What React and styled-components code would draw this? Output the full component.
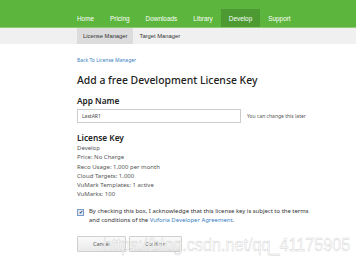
import React from 'react';
import styled, { createGlobalStyle } from 'styled-components';

const GlobalStyle = createGlobalStyle`
  body {
    margin: 0;
    background: #ffffff;
    font-family: "Liberation Sans", Arial, sans-serif;
  }
`;

const Page = styled.div`
  position: relative;
  width: 356px;
  height: 271px;
  overflow: hidden;
  background: #ffffff;
`;

const TopBar = styled.nav`
  height: 28px;
  background: #5cb53c;
  border-bottom: 1px solid #8dcc72;
  display: flex;
  align-items: flex-end;
  padding-left: 69px;
  box-sizing: border-box;
`;

const NavItem = styled.a`
  height: 18px;
  display: flex;
  align-items: center;
  padding: 0 8px;
  font-family: "Liberation Sans", Arial, sans-serif;
  font-size: 6.4px;
  color: #ffffff;
  background: ${(p) => (p.active ? '#4c9a31' : 'transparent')};
`;

const SubBar = styled.div`
  height: 16px;
  background: #f0f0f0;
  display: flex;
  padding-left: 77px;
`;

const SubItem = styled.a`
  display: flex;
  align-items: center;
  padding: 0 6px;
  font-family: "Liberation Sans", Arial, sans-serif;
  font-size: 5.8px;
  color: #333333;
  background: ${(p) => (p.active ? '#dcdcdc' : 'transparent')};
`;

const Content = styled.main`
  padding: 13px 0 0 77px;
  font-family: "Noto Sans", "Liberation Sans", sans-serif;
  color: #333333;
`;

const BackLink = styled.a`
  display: block;
  font-size: 5px;
  color: #3a7fc1;
  line-height: 7px;
`;

const Title = styled.h1`
  margin: 9px 0 0;
  font-size: 10.4px;
  font-weight: 500;
  color: #222222;
  line-height: 14px;
`;

const Label = styled.h2`
  margin: ${(p) => p.top}px 0 0;
  font-size: 8.3px;
  font-weight: 600;
  color: #222222;
  line-height: 11px;
`;

const InputRow = styled.div`
  display: flex;
  align-items: center;
  margin-top: 3px;
`;

const TextInput = styled.div`
  width: 164px;
  height: 14px;
  box-sizing: border-box;
  border: 1px solid #cccccc;
  display: flex;
  align-items: center;
  padding-left: 4px;
  font-size: 5px;
  color: #444444;
`;

const Hint = styled.span`
  margin-left: 6px;
  font-size: 5px;
  color: #555555;
`;

const InfoList = styled.div`
  margin-top: 1px;
  display: flex;
  flex-direction: column;
`;

const InfoLine = styled.span`
  font-size: 6px;
  line-height: 9.3px;
  color: #555555;
`;

const AgreeRow = styled.div`
  display: flex;
  align-items: flex-start;
  margin-top: 7px;
  gap: 5px;
`;

const Check = styled.span`
  width: 5px;
  height: 5px;
  margin-top: 2px;
  border: 1px solid #7b9bc7;
  background: #dfe8f5;
  display: flex;
  align-items: center;
  justify-content: center;
  font-size: 5px;
  line-height: 5px;
  color: #203a6a;
`;

const AgreeText = styled.p`
  margin: 0;
  white-space: nowrap;
  font-size: 5.95px;
  line-height: 9.5px;
  color: #333333;
`;

const AgreeLink = styled.a`
  color: #3a7fc1;
`;

const Buttons = styled.div`
  display: flex;
  gap: 3px;
  margin-top: 10px;
`;

const Button = styled.button`
  width: ${(p) => p.w}px;
  height: 16px;
  padding: 0;
  border: 1px solid #cfcfcf;
  border-radius: 1px;
  background: linear-gradient(#fafafa, #e9e9e9);
  font-family: "Noto Sans", "Liberation Sans", sans-serif;
  font-size: 5.5px;
  color: #555555;
`;

const Watermark = styled.div`
  position: absolute;
  left: 103px;
  top: 234px;
  font-family: "Liberation Sans", Arial, sans-serif;
  font-size: 18.5px;
  color: rgba(255, 255, 255, 0.85);
  -webkit-text-stroke: 0.5px rgba(190, 190, 190, 0.7);
  white-space: nowrap;
  transform: scaleX(0.875);
  transform-origin: left top;
  pointer-events: none;
`;

const info = [
  'Develop',
  'Price: No Charge',
  'Reco Usage: 1,000 per month',
  'Cloud Targets: 1,000',
  'VuMark Templates: 1 active',
  'VuMarks: 100',
];

const App = () => {
  return (
    <Page>
      <GlobalStyle />
      <TopBar>
        <NavItem>Home</NavItem>
        <NavItem>Pricing</NavItem>
        <NavItem>Downloads</NavItem>
        <NavItem>Library</NavItem>
        <NavItem active>Develop</NavItem>
        <NavItem>Support</NavItem>
      </TopBar>
      <SubBar>
        <SubItem active>License Manager</SubItem>
        <SubItem>Target Manager</SubItem>
      </SubBar>
      <Content>
        <BackLink>Back To License Manager</BackLink>
        <Title>Add a free Development License Key</Title>
        <Label top={8}>App Name</Label>
        <InputRow>
          <TextInput>LastAR1</TextInput>
          <Hint>You can change this later</Hint>
        </InputRow>
        <Label top={9}>License Key</Label>
        <InfoList>
          {info.map((line) => (
            <InfoLine key={line}>{line}</InfoLine>
          ))}
        </InfoList>
        <AgreeRow>
          <Check>✔</Check>
          <AgreeText>
            By checking this box, I acknowledge that this license key is subject to the terms
            <br />
            and conditions of the <AgreeLink>Vuforia Developer Agreement</AgreeLink>.
          </AgreeText>
        </AgreeRow>
        <Buttons>
          <Button w={49}>Cancel</Button>
          <Button w={53}>Confirm</Button>
        </Buttons>
      </Content>
      <Watermark>https://blog.csdn.net/qq_41175905</Watermark>
    </Page>
  );
};

export default App;
